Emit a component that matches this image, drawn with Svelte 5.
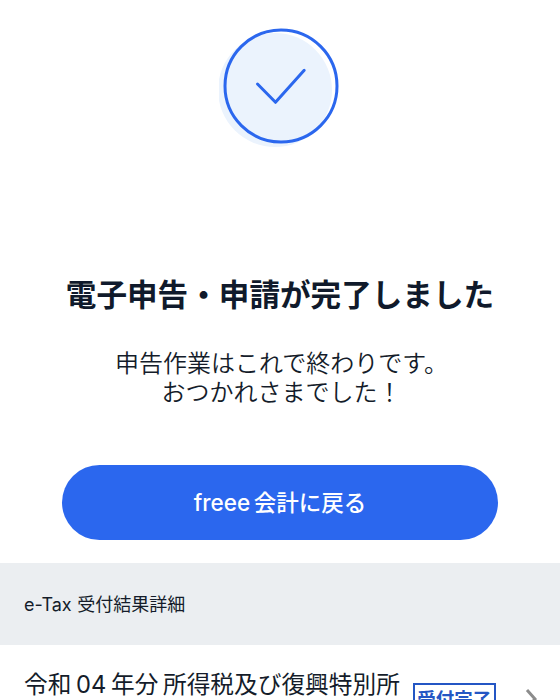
<script>
  let title = "電子申告・申請が完了しました";
</script>

<main>
  <div class="hero">
    <svg class="mark" width="124" height="124" viewBox="0 0 124 124" fill="none" xmlns="http://www.w3.org/2000/svg">
      <circle cx="56" cy="66" r="57" fill="#ebf3fd" />
      <circle cx="62" cy="62" r="56" stroke="#2b67ee" stroke-width="3" />
      <path d="M38.5 60L56.5 78.3L85.2 46.3" stroke="#2b67ee" stroke-width="3" stroke-linecap="round" stroke-linejoin="round" />
    </svg>
  </div>

  <h1>{title}</h1>
  <p class="lead">申告作業はこれで終わりです。<br />おつかれさまでした！</p>

  <div class="actions">
    <a class="back" href="/#">freee 会計に戻る</a>
  </div>

  <h2 class="band">e-Tax 受付結果詳細</h2>

  <div class="row">
    <span class="name">令和 04 年分 所得税及び復興特別所</span>
    <span class="badge">受付完了</span>
    <svg class="chev" width="14" height="24" viewBox="0 0 14 24" fill="none" xmlns="http://www.w3.org/2000/svg">
      <path d="M2 2L10 11L2 20" stroke="#8c8c8c" stroke-width="3" />
    </svg>
  </div>
</main>

<style>
  :global(body) {
    background: #fff;
    overflow: hidden;
  }

  main {
    height: 700px;
    overflow: hidden;
    font-family: "Inter", "Noto Sans CJK JP", sans-serif;
    color: #141c2a;
  }

  .hero {
    display: flex;
    justify-content: center;
    padding-top: 24px;
  }

  .mark {
    display: block;
    margin-left: 2px;
  }

  h1 {
    margin: 127px 0 0;
    font-size: 30.6px;
    line-height: 40px;
    font-weight: 700;
    text-align: center;
    color: #101a2b;
  }

  .lead {
    margin: 34px 0 0;
    padding-left: 3px;
    font-size: 24px;
    line-height: 29px;
    font-weight: 350;
    text-align: center;
  }

  .actions {
    padding: 58px 62px 0;
  }

  .back {
    display: block;
    height: 75px;
    line-height: 75px;
    border-radius: 38px;
    background: #2b67ee;
    color: #fff;
    font-size: 22.5px;
    font-weight: 500;
    word-spacing: -2.5px;
    text-align: center;
    text-decoration: none;
  }

  .band {
    margin: 23px 0 0;
    height: 82px;
    padding: 0 24px;
    background: #ebeef1;
    font-size: 18px;
    line-height: 84px;
    font-weight: 400;
    word-spacing: 0.5px;
  }

  .row {
    display: flex;
    align-items: flex-start;
    padding: 25px 24px 0;
  }

  .name {
    font-size: 23.7px;
    line-height: 30px;
    font-weight: 400;
    word-spacing: -2px;
    white-space: nowrap;
  }

  .badge {
    margin: 13px 0 0 13px;
    padding: 0 2.5px;
    border: 2px solid #2456c4;
    color: #2456c4;
    font-size: 18.5px;
    line-height: 28px;
    font-weight: 600;
    white-space: nowrap;
  }

  .chev {
    margin: 18px 0 0 29px;
    flex: none;
  }
</style>
